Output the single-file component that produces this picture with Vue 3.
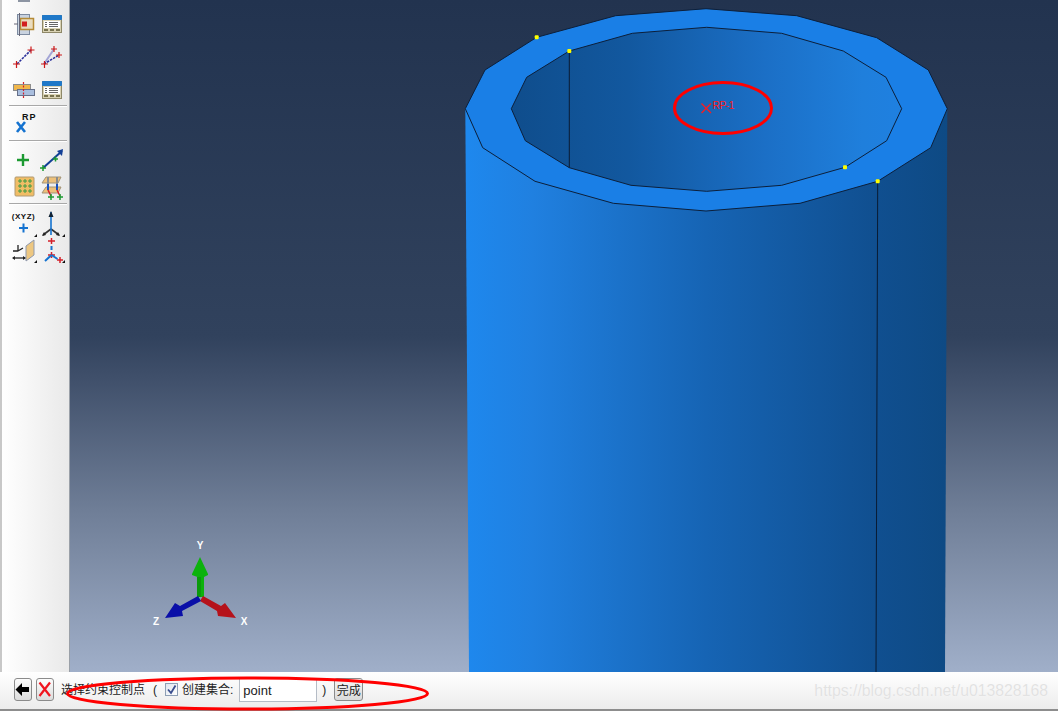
<script setup>
const outer = '465.3,108.7 485,70 536.7,37.3 615.7,15.7 706,8.7 796.7,15.7 876.7,37.7 928.3,70 947.3,108.7 930.7,147.7 877.7,181.3 800,203.3 706,211 613.3,203.3 535,181.3 482.7,147.7'
const inner = '511.3,108.7 526.7,77.3 569.3,51 632.3,33.3 706.7,27.3 781.7,33.3 843.3,51 886,77.3 901.7,108.7 886.7,140.7 845,167.3 781.7,185.3 706.7,191.3 631,185.3 569.3,167.7 525.3,140.7'
const points = [[536.7, 37.3], [569.3, 51], [845, 167.3], [877.7, 181.3]]
const dots = [8, 13, 18]
</script>

<template>
  <div class="app">
    <div class="main">
      <aside class="toolbox">
        <div class="stub"></div>
        <div class="tools first">
          <svg class="tool" viewBox="0 0 28 28">
            <rect x="7.5" y="4.5" width="12" height="20" fill="#c9d3e0" stroke="#7d8ba0" />
            <rect x="10.5" y="8.5" width="13" height="11" fill="#e9dcc0" stroke="#b58a35" stroke-width="1.5" />
            <rect x="12" y="11.5" width="5" height="5" fill="#d21f1f" />
            <path d="M9.5 3v23M4 14h4" stroke="#667" fill="none" />
          </svg>
          <svg class="tool" viewBox="0 0 28 28">
            <rect x="4.5" y="5.5" width="19" height="17" fill="#d9d2b4" stroke="#8e8868" />
            <rect x="4" y="5" width="20" height="5" rx="1" fill="#1f78c8" />
            <rect x="6" y="11" width="16" height="7" fill="#fff" />
            <path d="M7 12.5h2M11 12.5h9M7 14.5h2M11 14.5h9M7 16.5h2M11 16.5h9" stroke="#666" />
            <path d="M6 20h4M12 20h4M18 20h4" stroke="#77724f" stroke-width="2" />
          </svg>
          <svg class="tool" viewBox="0 0 28 28">
            <path d="M7 21 21 7" stroke="#2a2f9a" stroke-width="1.6" stroke-dasharray="2.5 1" />
            <path d="M3 21h7M6.5 18v7M17.5 7h7M21 3.5v7" stroke="#cc1a1a" stroke-width="1.2" />
          </svg>
          <svg class="tool" viewBox="0 0 28 28">
            <path d="M6 21 16 6" stroke="#a3a5d6" stroke-width="2" />
            <path d="M6 21 21 12" stroke="#2a2f9a" stroke-width="1.6" stroke-dasharray="2.5 1" />
            <path d="M3 21h7M6.5 18v7M13 6h6M16 3v6M18 12h6M21 9v6" stroke="#cc1a1a" stroke-width="1.2" />
          </svg>
          <svg class="tool" viewBox="0 0 28 28">
            <rect x="3.5" y="8.5" width="17" height="6" fill="#f0b74c" stroke="#8d8d8d" />
            <rect x="7.5" y="13.5" width="17" height="6" fill="#a9bede" stroke="#66708a" />
            <path d="M13.5 6v16" stroke="#d3202a" stroke-width="1.2" stroke-dasharray="2 1.5" />
          </svg>
          <svg class="tool" viewBox="0 0 28 28">
            <rect x="4.5" y="5.5" width="19" height="17" fill="#d9d2b4" stroke="#8e8868" />
            <rect x="4" y="5" width="20" height="5" rx="1" fill="#1f78c8" />
            <rect x="6" y="11" width="16" height="7" fill="#fff" />
            <path d="M7 12.5h2M11 12.5h9M7 14.5h2M11 14.5h9M7 16.5h2M11 16.5h9" stroke="#666" />
            <path d="M6 20h4M12 20h4M18 20h4" stroke="#77724f" stroke-width="2" />
          </svg>
        </div>
        <hr class="sep" />
        <div class="rp">
          <svg class="tool" viewBox="0 0 28 28">
            <text x="12" y="9" class="rp-text">RP</text>
            <path d="M7 11l8 10M15 11 7 21" stroke="#1573d0" stroke-width="2.6" />
          </svg>
        </div>
        <hr class="sep" />
        <div class="tools third">
          <svg class="tool" viewBox="0 0 28 28">
            <path d="M7 14h12M13 8v12" stroke="#1c9a32" stroke-width="2.4" />
          </svg>
          <svg class="tool" viewBox="0 0 28 28">
            <path d="M5 22 24 5" stroke="#123f96" stroke-width="2" />
            <path d="M25 3l-1 7-5-5z" fill="#123f96" />
            <path d="M2 22h6M5 19v6M15 13h5M17.5 10.5v5" stroke="#1c9a32" stroke-width="1.5" />
          </svg>
          <svg class="tool" viewBox="0 0 28 28">
            <rect x="5" y="4" width="19" height="19" rx="1" fill="#f1bd65" stroke="#b09a74" />
            <g v-for="x in dots" :key="x">
              <path
                v-for="y in dots"
                :key="y"
                :d="`M${x} ${y}h4M${x + 2} ${y - 2}v4`"
                stroke="#3f9a45"
                stroke-width="1"
              />
            </g>
          </svg>
          <svg class="tool" viewBox="0 0 28 28">
            <path d="M8 4h15l-3 6H4zM8 14h15l-3 6H4z" fill="#edc07a" stroke="#a29478" />
            <path d="M10 4v8M19 4v8" stroke="#8b8b8b" stroke-width="2" />
            <path d="M10 11v6" stroke="#1650c0" stroke-width="2" />
            <path d="M19 11v6" stroke="#1650c0" stroke-width="2" />
            <path d="M10 17l3 6M19 17l3 6" stroke="#d3202a" stroke-width="1.6" />
            <path d="M10 24h6M13 21v6M19 24h6M22 21v6" stroke="#1c9a32" stroke-width="1.5" />
          </svg>
        </div>
        <hr class="sep" />
        <div class="tools fourth">
          <div class="corner">
            <svg class="tool" viewBox="0 0 28 28">
              <text x="13.5" y="9" class="xyz">(XYZ)</text>
              <path d="M9 18h9M13.5 13.5v9" stroke="#1573d0" stroke-width="2" />
            </svg>
          </div>
          <div class="corner">
            <svg class="tool" viewBox="0 0 28 28">
              <path d="M13 19 5 25M13 19l8 6" stroke="#333" stroke-width="1.6" />
              <path d="M13 2v23" stroke="#1573d0" stroke-width="1.6" />
              <path d="M13 1l-2.5 6h5z" fill="#123" />
              <path d="M4 26l2-4 2 3zM22 26l-4-1 2-3z" fill="#222" />
            </svg>
          </div>
          <div class="corner">
            <svg class="tool" viewBox="0 0 28 28">
              <path d="M16 10 24 4v15l-8 6z" fill="#edc781" stroke="#8f99ad" />
              <path d="M8 15v-6M8 15H3M8 15l5-3" stroke="#222" stroke-width="1.3" />
              <path d="M3 22h12" stroke="#222" stroke-width="1.3" />
              <path d="M2 22l3-2v4zM16 22l-3-2v4z" fill="#222" />
            </svg>
          </div>
          <div class="corner">
            <svg class="tool" viewBox="0 0 28 28">
              <path d="M10 5h7M13.5 2v6M10 19h7M13.5 16v6M19 24h6M22 21v6" stroke="#d3202a" stroke-width="1.5" />
              <path d="M13.5 10v4M13.5 19 7 25M13.5 19l6 4" stroke="#1573d0" stroke-width="2" />
            </svg>
          </div>
        </div>
      </aside>

      <svg class="viewport" viewBox="70 0 988 672">
        <defs>
          <linearGradient id="sky" x1="0" y1="0" x2="0" y2="1">
            <stop offset="0" stop-color="#22334f" />
            <stop offset="0.5" stop-color="#31425d" />
            <stop offset="0.56" stop-color="#3f4f6a" />
            <stop offset="0.76" stop-color="#6f7e97" />
            <stop offset="1" stop-color="#a0afc9" />
          </linearGradient>
          <linearGradient id="wall" x1="0" y1="0" x2="1" y2="0">
            <stop offset="0" stop-color="#1e88ee" />
            <stop offset="0.14" stop-color="#2080e0" />
            <stop offset="0.5" stop-color="#1664b4" />
            <stop offset="0.85" stop-color="#104f90" />
            <stop offset="1" stop-color="#0e4a84" />
          </linearGradient>
          <linearGradient id="bore" x1="0" y1="0" x2="1" y2="0">
            <stop offset="0" stop-color="#0f4d8c" />
            <stop offset="0.3" stop-color="#12589f" />
            <stop offset="0.65" stop-color="#1b6fc6" />
            <stop offset="0.9" stop-color="#1f7fdc" />
            <stop offset="1" stop-color="#1f80e0" />
          </linearGradient>
        </defs>
        <rect x="70" y="0" width="988" height="672" fill="url(#sky)" />

        <polygon points="465.3,108.7 469,672 945,672 947.3,108.7" fill="url(#wall)" />
        <polygon :points="outer" fill="#1a7fe6" stroke="#0c1f3a" stroke-width="1" stroke-linejoin="round" />
        <polygon :points="inner" fill="url(#bore)" stroke="#0c1f3a" stroke-width="1" stroke-linejoin="round" />
        <path d="M569.3 51V167.7M877.7 181.3 876 672" stroke="#0a1c34" stroke-width="1" fill="none" />
        <rect v-for="p in points" :key="p[0]" :x="p[0] - 2" :y="p[1] - 2" width="4" height="4" rx="1" fill="#ffff00" />

        <path class="cross" d="M701.5 103.5 711 113M711 103.5 701.5 113" />
        <text x="712.5" y="109" class="rp-label">RP-1</text>
        <ellipse cx="723" cy="108" rx="48.5" ry="25.5" fill="none" stroke="#ff0000" stroke-width="3" />

        <g>
          <path d="M200 557 208 574 208 575 204 577V597H197.5V577L192 575V574z" fill="#0cb20c" />
          <path d="M197 577h4v20h-4z" fill="#0b9a0b" />
          <path d="M203 596 221 606 225 603 236 618 218 616 217 611 200 601z" fill="#b5121b" />
          <path d="M198 596 180 606 175 603 165 618 183 616 182 611 201 601z" fill="#0a0fa8" />
          <text x="200" y="549" class="axis">Y</text>
          <text x="244" y="625" class="axis">X</text>
          <text x="156" y="625" class="axis">Z</text>
        </g>
      </svg>
    </div>

    <footer class="prompt">
      <button class="icon-btn">
        <svg viewBox="0 0 18 23" width="18" height="23">
          <path d="M1.5 11.5 8 5v4h7v5H8v4z" fill="#000" />
        </svg>
      </button>
      <button class="icon-btn cancel">
        <svg viewBox="0 0 18 23" width="18" height="23">
          <path d="M3.5 4.5 14 18M14 4.5 3.5 18" stroke="#f0141e" stroke-width="2.2" />
        </svg>
      </button>
      <span class="label">选择约束控制点</span>
      <span class="paren">(</span>
      <span class="check">
        <svg viewBox="0 0 13 13" width="13" height="13">
          <path d="M3 6.5 6 10 10.5 2.5" stroke="#3b4f8f" stroke-width="1.8" fill="none" />
        </svg>
      </span>
      <span class="label set">创建集合:</span>
      <input class="name" value="point" />
      <span class="paren close">)</span>
      <button class="done">完成</button>
      <span class="watermark">https://blog.csdn.net/u013828168</span>
      <svg class="mark" viewBox="0 0 440 39" width="440" height="39">
        <ellipse cx="247.5" cy="21.5" rx="180" ry="15.5" fill="none" stroke="#ff0000" stroke-width="3" />
      </svg>
    </footer>
  </div>
</template>

<style>
html,
body {
  margin: 0;
  overflow: hidden;
}
</style>

<style scoped>
.app {
  width: 1058px;
  height: 711px;
  display: flex;
  flex-direction: column;
  font-family: "Liberation Sans", "Noto Sans CJK SC", sans-serif;
  overflow: hidden;
}

.main {
  display: flex;
  height: 672px;
}

.toolbox {
  width: 70px;
  box-sizing: border-box;
  border-left: 2px solid #c8c8c8;
  border-right: 1px solid #9aa0a8;
  background: linear-gradient(to right, #ffffff, #e9e9e9);
  padding: 0 0 0 8px;
  overflow: hidden;
}

.stub {
  width: 12px;
  height: 2px;
  margin: 0 0 8px 8px;
  background: #8d95a3;
}

.tools {
  display: grid;
  grid-template-columns: 28px 28px;
  grid-auto-rows: 33px;
}

.tool {
  display: block;
  width: 28px;
  height: 28px;
}

.first {
  height: 95px;
}

.third {
  grid-auto-rows: 27px;
  height: 61px;
  box-sizing: border-box;
  padding-top: 4px;
}

.fourth {
  grid-auto-rows: 26px;
  padding-top: 5px;
}

.sep {
  width: 58px;
  height: 0;
  margin: 0 0 0 -1px;
  border: 0;
  border-top: 1px solid #a8a8a8;
  border-bottom: 1px solid #fff;
}

.rp {
  height: 33px;
  padding-top: 4px;
  box-sizing: border-box;
}

.corner {
  position: relative;
}

.corner::after {
  content: "";
  position: absolute;
  right: 1px;
  bottom: -1px;
  border-left: 3px solid transparent;
  border-bottom: 3px solid #111;
}

.rp-text {
  font-size: 9px;
  font-weight: 700;
  letter-spacing: 1px;
  fill: #111;
}

.xyz {
  font-size: 8px;
  font-weight: 700;
  text-anchor: middle;
  letter-spacing: 0.5px;
  fill: #111;
}

.viewport {
  display: block;
  flex: 1;
  height: 672px;
}

.cross {
  fill: none;
  stroke: #ff1a1a;
  stroke-width: 1.2;
}

.rp-label {
  font-size: 10px;
  letter-spacing: -0.3px;
  fill: #ff1a1a;
}

.axis {
  font-size: 10px;
  font-weight: 700;
  text-anchor: middle;
  fill: #ffffff;
}

.prompt {
  position: relative;
  height: 39px;
  box-sizing: border-box;
  display: flex;
  align-items: flex-start;
  padding: 6px 10px 0 14px;
  background: linear-gradient(to bottom, #ffffff, #ececec);
  border-bottom: 2px solid #8d8d8d;
  color: #222;
  font-size: 12px;
}

.icon-btn {
  width: 18px;
  height: 23px;
  padding: 0;
  margin-right: 4px;
  border: 1px solid #8b8b8b;
  border-radius: 3px;
  background: linear-gradient(to bottom, #fdfdfd, #dcdcdc);
}

.icon-btn svg {
  display: block;
  margin: -1px;
}

.label {
  margin-left: 3px;
  line-height: 24px;
}

.paren {
  margin-left: 8px;
  line-height: 24px;
  color: #222;
}

.check {
  width: 13px;
  height: 13px;
  margin: 5px 0 0 8px;
  border: 1px solid #8e9fb5;
  box-sizing: border-box;
  background: linear-gradient(135deg, #dfe5ee, #fff);
  display: flex;
  align-items: center;
  justify-content: center;
}

.check svg {
  flex: none;
}

.set {
  margin-left: 4px;
}

.name {
  width: 78px;
  height: 24px;
  box-sizing: border-box;
  margin-left: 6px;
  padding: 0 3px;
  border: 1px solid #b5bcc6;
  background: #fff;
  font: 13px "Liberation Sans", sans-serif;
  color: #222;
}

.close {
  margin-left: 5px;
}

.done {
  width: 29px;
  height: 23px;
  margin-left: 8px;
  padding: 0;
  border: 1px solid #8b8b8b;
  border-radius: 3px;
  background: linear-gradient(to bottom, #f6f6f6, #dadada);
  color: #222;
  font: 12px "Liberation Sans", "Noto Sans CJK SC", sans-serif;
}

.watermark {
  margin-left: auto;
  font-size: 15.8px;
  line-height: 26px;
  color: #e2e2e2;
  text-shadow: 0 0 1px #fff;
}

.mark {
  position: absolute;
  left: 0;
  top: 0;
  pointer-events: none;
}
</style>
